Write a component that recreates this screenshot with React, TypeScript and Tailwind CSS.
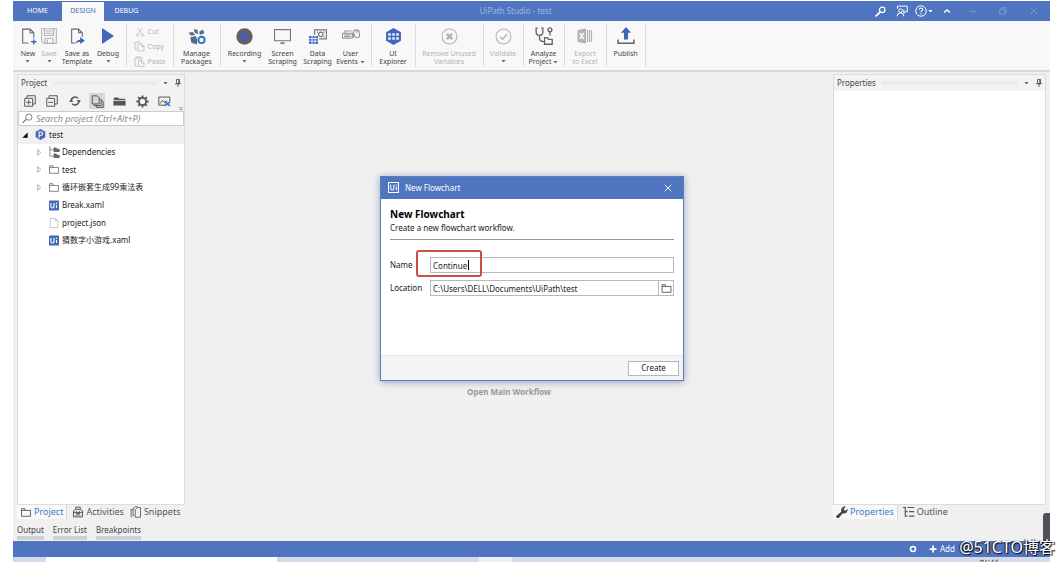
import type { ReactNode } from 'react'

type IconProps = { className?: string; children: ReactNode }

// All line icons share a 16x16 box
function Icon({ className = 'w-4 h-4', children }: IconProps) {
  return (
    <svg viewBox="0 0 16 16" fill="none" stroke="currentColor" className={`shrink-0 ${className}`} aria-hidden="true">
      {children}
    </svg>
  )
}

function Caret({ className = 'text-[#666]' }: { className?: string }) {
  return (
    <svg viewBox="0 0 5 3" className={`inline-block w-[5px] h-[3px] shrink-0 ${className}`} aria-hidden="true">
      <path d="M0.5 0h4L2.5 2.6z" fill="currentColor" />
    </svg>
  )
}

function FolderIcon({ className }: { className?: string }) {
  return (
    <Icon className={className}>
      <path d="M1.5 13.5v-11h5v2.5h8v8.5zM1.5 5h5" strokeWidth="1.3" />
    </Icon>
  )
}

function UiIcon() {
  return (
    <svg viewBox="0 0 16 16" className="w-[10px] h-[11px] shrink-0" aria-hidden="true">
      <rect width="16" height="16" rx="1" fill="#4569b8" />
      <path d="M3 4v5.500q0 2.500 2.500 2.500t2.500-2.500V4M12 7v5M12 3.500v2" stroke="#fff" strokeWidth="1.8" fill="none" />
    </svg>
  )
}

function PinIcon() {
  return (
    <Icon className="w-2 h-2">
      <path d="M5 1h6v8H5zM9.5 1v8M2 9.5h12M8 10v6" strokeWidth="1.6" />
    </Icon>
  )
}

function CopyIcon({ className }: { className?: string }) {
  return (
    <Icon className={className}>
      <path d="M5 12H1.5V1.5H8L10 4M5.500 4.5h6l3 3v7h-9zM11 4.5V8h3.500" />
    </Icon>
  )
}

type RibbonButtonProps = {
  icon: ReactNode
  lines: string[]
  width: string
  caret?: 'below' | 'inline'
  disabled?: boolean
}

function RibbonButton({ icon, lines, width, caret, disabled }: RibbonButtonProps) {
  return (
    <button type="button" disabled={disabled} className={`flex flex-col items-center pt-[2px] ${width} ${disabled ? 'text-[#b3b3b3]' : 'text-[#444]'}`}>
      <span className="flex h-5 items-center justify-center">{icon}</span>
      <span className="mt-1 flex flex-col items-center whitespace-nowrap text-[7px] leading-[8px]">
        {lines.map((line, i) => (
          <span key={line} className="flex items-center gap-[2px]">
            {line}
            {caret === 'inline' && i === lines.length - 1 && <Caret />}
          </span>
        ))}
        {caret === 'below' && <Caret className="mt-[2px] text-[#666]" />}
      </span>
    </button>
  )
}

function RibbonGroup({ width, children }: { width: string; children: ReactNode }) {
  return <div className={`flex shrink-0 justify-center border-r border-[#dcdcdc] pr-px ${width}`}>{children}</div>
}

const clipboard = [
  {
    label: 'Cut',
    icon: <Icon className="w-[10px] h-[10px]"><path d="M4 1l7 10M12 1L5 11" /><circle cx="4" cy="13" r="2" /><circle cx="12" cy="13" r="2" /></Icon>,
  },
  { label: 'Copy', icon: <CopyIcon className="w-[11px] h-[11px]" /> },
  {
    label: 'Paste',
    icon: <Icon className="w-[11px] h-[11px]"><path d="M6 14.5H1.5v-12H4M9 2.5h2.500V5M4 1h5v3H4zM6.500 6.5h5l3 3v6h-8zM11 6.5V10h3.500" /></Icon>,
  },
]

function Ribbon() {
  return (
    <div className="flex h-[51px] shrink-0 border-b-2 border-[#d9d9d9] bg-[#f8f8f8] py-[3px]">
      <RibbonGroup width="w-[114px]">
        <RibbonButton width="w-[22px]" lines={['New']} caret="below" icon={
          <Icon className="w-[17px] h-[18px] text-[#666]">
            <path d="M8 14.5H2.500v-13h7l3.500 3.500v5M9.500 1.5V5H13" />
            <path d="M13 11v5M10.500 13.5h5" stroke="#3f66b8" strokeWidth="1.4" />
          </Icon>
        } />
        <RibbonButton width="w-5" lines={['Save']} caret="below" disabled icon={
          <Icon className="w-[18px] h-[18px]">
            <path d="M1.5 1.5h13v13h-11l-2-2zM4 1.5v6h8v-6M5 3.5h6M5 5.5h6M4.500 14.5v-4.500h7v4.500M6.500 11v3" />
          </Icon>
        } />
        <RibbonButton width="w-9" lines={['Save as', 'Template']} icon={
          <Icon className="w-[17px] h-[18px] text-[#666]">
            <path d="M6 14.5H2.500v-13h6.500l3.500 3.500v4M9 1.5V5h3.500" />
            <path d="M6.500 15q.5-3.500 4-3.500V9l4.500 3.500-4.500 3v-2q-2.500 0-4 1.500z" fill="#3f66b8" stroke="none" />
          </Icon>
        } />
        <RibbonButton width="w-[26px]" lines={['Debug']} caret="below" icon={
          <Icon className="w-4 h-4"><path d="M2 0l12 8-12 8z" fill="#4168bd" stroke="none" /></Icon>
        } />
      </RibbonGroup>

      <RibbonGroup width="w-[47px]">
        <div className="flex flex-col gap-[4px] pt-[2px]">
          {clipboard.map((item) => (
            <button key={item.label} type="button" disabled className="flex h-[11px] items-center gap-[2px] text-[7px] leading-[11px] text-[#b3b3b3]">
              <span className="flex w-3 justify-center">{item.icon}</span>
              {item.label}
            </button>
          ))}
        </div>
      </RibbonGroup>

      <RibbonGroup width="w-[47px]">
        <RibbonButton width="w-10" lines={['Manage', 'Packages']} icon={
          <Icon className="w-[18px] h-[18px]">
            <path d="M2 9l5-1 1 3v4.500L3 14zM.5 5l3.500-.5 2.500 2.500-4 .5zM5 2l3.500.5L9 6.500 6 5zM10 4l3.500-1.500 1 3-4 1.500z" fill="#566a8c" stroke="none" />
            <circle cx="12" cy="11.5" r="2.800" stroke="#2f6fd0" strokeWidth="1.700" />
          </Icon>
        } />
      </RibbonGroup>

      <RibbonGroup width="w-[151px]">
        <RibbonButton width="w-10" lines={['Recording']} caret="below" icon={
          <Icon className="w-[17px] h-[17px]">
            <circle cx="8" cy="8" r="7.700" fill="#626262" stroke="none" />
            <circle cx="8" cy="8" r="3.600" fill="#4a5cb8" stroke="none" />
          </Icon>
        } />
        <RibbonButton width="w-9" lines={['Screen', 'Scraping']} icon={
          <Icon className="w-[17px] h-[17px] text-[#777]">
            <path d="M.5 1.5h15v10.500H.5z" />
            <path d="M6 13.5h4v1.500H6z" fill="currentColor" stroke="none" />
          </Icon>
        } />
        <RibbonButton width="w-[34px]" lines={['Data', 'Scraping']} icon={
          <Icon className="w-[18px] h-[18px] text-[#777]">
            <path d="M5 7V2.500h10.500v8H9M7 4.500h1M13 4.500h1M13 8.500h1" />
            <circle cx="10.500" cy="6.500" r="2" />
            <path d="M0 8h8v7H0z" fill="#4268c4" stroke="none" />
            <path d="M0 10.300h8M0 12.600h8M2.700 8v7M5.300 8v7" stroke="#f8f8f8" strokeWidth=".7" />
          </Icon>
        } />
        <RibbonButton width="w-8" lines={['User', 'Events']} caret="inline" icon={
          <Icon className="w-[18px] h-[18px] text-[#999]">
            <path d="M.5 5.500h8.500V10H.5zM2 7h5.500M2 8.500h5.500M2.500 5.500V3.500h6M10 9.500V5q0-2.500 2.700-2.500T15.500 5v3q0 1.500-2 1.500T11 8V5.500M13 2.500V5.500" />
          </Icon>
        } />
      </RibbonGroup>

      <RibbonGroup width="w-[44px]">
        <RibbonButton width="w-10" lines={['UI', 'Explorer']} icon={
          <Icon className="w-[17px] h-[17px]">
            <path d="M8 0l7 4v8l-7 4-7-4V4z" fill="#4066be" stroke="none" />
            <path d="M3 5h2.500v2.200H3zM6.800 5h2.500v2.200H6.800zM10.500 5H13v2.200h-2.500zM3 8.800h2.500V11H3zM6.800 8.800h2.500V11H6.800zM10.500 8.800H13V11h-2.500z" fill="#e6edfb" stroke="none" />
          </Icon>
        } />
      </RibbonGroup>

      <RibbonGroup width="w-[68px]">
        <RibbonButton width="w-16" lines={['Remove Unused', 'Variables']} disabled icon={
          <Icon className="w-[17px] h-[17px]">
            <circle cx="8" cy="8" r="7" />
            <path d="M5.500 5.500l5 5M10.500 5.500l-5 5" strokeWidth="2.400" />
          </Icon>
        } />
      </RibbonGroup>

      <RibbonGroup width="w-10">
        <RibbonButton width="w-9" lines={['Validate']} caret="below" disabled icon={
          <Icon className="w-[17px] h-[17px]">
            <circle cx="8" cy="8" r="7" />
            <path d="M4.800 8.200l2.400 2.300 4.200-4.700" strokeWidth="1.300" />
          </Icon>
        } />
      </RibbonGroup>

      <RibbonGroup width="w-[41px]">
        <RibbonButton width="w-9" lines={['Analyze', 'Project']} caret="inline" icon={
          <Icon className="w-[18px] h-[18px] text-[#666]">
            <path d="M2.500 1H1v3q0 3.500 3 3.500t3-3.500V1H5.500M4 7.500v2q0 3.500 4 3.500" strokeWidth="1.200" />
            <circle cx="13.300" cy="2.500" r="1.700" strokeWidth="1.200" />
            <path d="M13.300 4v3.500M8.500 15.300V9.500h2.500l1 1.500h3.300v4.300z" strokeWidth="1.200" />
          </Icon>
        } />
      </RibbonGroup>

      <RibbonGroup width="w-[42px]">
        <RibbonButton width="w-9" lines={['Export', 'to Excel']} disabled icon={
          <Icon className="w-4 h-4">
            <path d="M.5 2L9 .5v15L.5 14z" fill="currentColor" stroke="none" />
            <path d="M2.800 5l4 6M6.800 5l-4 6" stroke="#f8f8f8" strokeWidth="1.400" />
            <path d="M10.500 2v12M12.500 2v12M14.500 2v12" strokeWidth="1.200" />
          </Icon>
        } />
      </RibbonGroup>

      <RibbonGroup width="w-[39px]">
        <RibbonButton width="w-9" lines={['Publish']} icon={
          <Icon className="w-[18px] h-[18px]">
            <path d="M8 0l4.500 5H9.800v6H6.200V5H3.500z" fill="#3f66b8" stroke="none" />
            <path d="M1 11v3.500h14V11" stroke="#666" strokeWidth="1.400" />
          </Icon>
        } />
      </RibbonGroup>
    </div>
  )
}

function TitleBar() {
  return (
    <header className="relative flex h-5 shrink-0 items-stretch bg-[#5075c0] text-[7px] text-white">
      <nav className="flex pt-px">
        <button type="button" className="w-[49px]">HOME</button>
        <button type="button" className="w-[42px] bg-[#f8f8f8] text-[#4a6fbf]">DESIGN</button>
        <button type="button" className="w-[45px]">DEBUG</button>
      </nav>
      <h1 className="absolute left-1/2 -translate-x-1/2 whitespace-nowrap pr-8 text-[8px] leading-5 text-[#9db5df]">UiPath Studio - test</h1>
      <div className="ml-auto flex items-center pr-[2px]">
        <button type="button" aria-label="Search" className="flex w-[21px] justify-center">
          <Icon className="w-[11px] h-[11px]"><circle cx="10.500" cy="5.500" r="4" strokeWidth="1.800" /><path d="M7.500 8.500L1 15" strokeWidth="2.600" /></Icon>
        </button>
        <button type="button" aria-label="Feedback" className="flex w-[21px] justify-center">
          <Icon className="w-[12px] h-[12px]"><circle cx="6" cy="7.500" r="2.500" strokeWidth="1.300" /><path d="M1.500 15q0-4.500 4.500-4.500t4.500 4.500M2 5V1.500h13V9h-3l-1.500 2V6" strokeWidth="1.300" /></Icon>
        </button>
        <button type="button" aria-label="Help" className="flex w-[23px] items-center justify-center gap-[1px]">
          <Icon className="w-[12px] h-[12px]"><circle cx="8" cy="8" r="7" strokeWidth="1.300" /><path d="M5.800 6.200q.2-2.200 2.300-2.200t2.200 2q0 1-1.200 1.800T8 9.700M8 11v1.500" strokeWidth="1.400" /></Icon>
          <Caret className="text-white" />
        </button>
        <button type="button" aria-label="Collapse ribbon" className="flex w-[23px] justify-center">
          <Icon className="w-2 h-2"><path d="M2 11l6-5 6 5" strokeWidth="3" /></Icon>
        </button>
        <button type="button" aria-label="Minimize" className="flex w-[29px] justify-center text-[#86a2d8]">
          <Icon className="w-2 h-2"><path d="M1 9h14" strokeWidth="1.500" /></Icon>
        </button>
        <button type="button" aria-label="Restore" className="flex w-8 justify-center text-[#86a2d8]">
          <Icon className="w-2 h-2"><path d="M1.500 4.500h10v10h-10zM4.500 4V1.500h10v10H12" strokeWidth="1.500" /></Icon>
        </button>
        <button type="button" aria-label="Close" className="flex w-[29px] justify-center text-[#86a2d8]">
          <Icon className="w-2 h-2"><path d="M2 2l12 12M14 2L2 14" strokeWidth="1.500" /></Icon>
        </button>
      </div>
    </header>
  )
}

function PanelHeader({ title }: { title: string }) {
  return (
    <div className="flex h-4 shrink-0 items-center gap-[6px] bg-[#f2f2f2] pl-[3px] pr-[2px] text-[8px] text-[#444]">
      <h2>{title}</h2>
      <span className="h-1 flex-1 bg-[#ebebeb]" />
      <Caret />
      <PinIcon />
    </div>
  )
}

const tree = [
  { label: 'Dependencies', kind: 'deps' },
  { label: 'test', kind: 'folder' },
  { label: '循环嵌套生成99乘法表', kind: 'folder' },
  { label: 'Break.xaml', kind: 'xaml' },
  { label: 'project.json', kind: 'json' },
  { label: '猜数字小游戏.xaml', kind: 'xaml' },
]

function TreeIcon({ kind }: { kind: string }) {
  if (kind === 'xaml') return <UiIcon />
  if (kind === 'folder') return <FolderIcon className="w-[12px] h-[11px] text-[#777]" />
  if (kind === 'json') {
    return <Icon className="w-[10px] h-[12px] text-[#aaa]"><path d="M2 .8h8.500l3.500 3.500v11H2zM10.500 1v3.500H14" /></Icon>
  }
  return (
    <Icon className="w-[12px] h-[12px] text-[#666]">
      <path d="M2.500 0v13.500h5M2.500 5h5" />
      <path d="M7.500 2H11l1 1.500h3.500V8h-8zM7.500 10H11l1 1.500h3.500V16h-8z" fill="currentColor" stroke="none" />
    </Icon>
  )
}

function ProjectTree() {
  return (
    <ul className="grid h-[123px] auto-rows-fr text-[8px] text-[#222]">
      <li className="flex items-center gap-[3px] bg-[#f0f0f0] pl-1">
        <Icon className="mr-1 w-[6px] h-[6px] text-black"><path d="M15 1v14H1z" fill="currentColor" stroke="none" /></Icon>
        <svg viewBox="0 0 16 16" className="w-[11px] h-[11px] shrink-0" aria-hidden="true">
          <path d="M8 0l7 4v8l-7 4-7-4V4z" fill="#4569b8" />
          <path d="M6 13V4.500h2.500q2.500 0 2.500 2.300T8.500 9H6" stroke="#fff" strokeWidth="1.500" fill="none" />
        </svg>
        test
      </li>
      {tree.map((node) => (
        <li key={node.label} className="flex items-center pl-[18px]">
          <span className="flex w-3 items-center">
            {(node.kind === 'deps' || node.kind === 'folder') && (
              <Icon className="w-[7px] h-[7px] text-[#999]"><path d="M4 1.500l7 6.500-7 6.500z" strokeWidth="1.800" /></Icon>
            )}
          </span>
          <span className="mr-[2px] flex w-3 justify-center"><TreeIcon kind={node.kind} /></span>
          <span>{node.label}</span>
        </li>
      ))}
    </ul>
  )
}

function ToolButton({ label, active, children }: { label: string; active?: boolean; children: ReactNode }) {
  return (
    <button type="button" aria-label={label} className={`flex h-4 w-4 items-center justify-center ${active ? 'bg-[#d8d8d8]' : ''}`}>
      {children}
    </button>
  )
}

function ProjectPanel() {
  return (
    <section className="flex w-[168px] shrink-0 flex-col border border-[#dcdcdc] bg-white">
      <PanelHeader title="Project" />
      <div className="flex h-5 shrink-0 items-center justify-between bg-[#f2f2f2] pl-1 pr-[1px] text-[#555]">
        <ToolButton label="Expand all">
          <Icon className="w-[12px] h-[12px]"><path d="M1 4.500h10.500V15H1zM4 4V1h11v11h-3M6.300 6.500v6.500M3 9.800h6.500" strokeWidth="1.300" /></Icon>
        </ToolButton>
        <ToolButton label="Collapse all">
          <Icon className="w-[12px] h-[12px]"><path d="M1 4.500h10.500V15H1zM4 4V1h11v11h-3M3 9.800h6.500" strokeWidth="1.300" /></Icon>
        </ToolButton>
        <ToolButton label="Refresh">
          <Icon className="w-[12px] h-[12px]">
            <path d="M3 9A5.200 5.200 0 0 1 12 4.500M13 7A5.200 5.200 0 0 1 4 11.500" strokeWidth="2" />
            <path d="M0 9h6L3 5.500zM10 7h6l-3 3.500z" fill="currentColor" stroke="none" />
          </Icon>
        </ToolButton>
        <ToolButton label="Show all files" active>
          <Icon className="w-[13px] h-[13px]"><path d="M1.500 1h6l2.500 2.500V11H1.500zM4 11v2h8.500V6L10 3.500M6.500 13v2.200H15V8l-2.500-2" strokeWidth="1.200" /></Icon>
        </ToolButton>
        <ToolButton label="Open folder">
          <Icon className="w-[13px] h-[13px]"><path d="M1 3h5.500l1 1.500H15V6H1zM.5 7h15v6h-15z" fill="currentColor" stroke="none" /></Icon>
        </ToolButton>
        <ToolButton label="Settings">
          <Icon className="w-[13px] h-[13px]">
            <circle cx="8" cy="8" r="4.500" strokeWidth="2.200" />
            <path d="M8 .5V3M8 13v2.500M.5 8H3M13 8h2.500M2.700 2.700l1.800 1.800M11.500 11.500l1.800 1.800M2.700 13.300l1.800-1.800M11.500 4.500l1.800-1.800" strokeWidth="2.300" />
          </Icon>
        </ToolButton>
        <ToolButton label="Remove unused screenshots">
          <Icon className="w-[13px] h-[13px]">
            <path d="M9 12.500H1v-10h13.500V8M2.500 10.500l3-4 2.500 2.500 2-2 2 2" strokeWidth="1.200" />
            <path d="M8 8.500l7 5M15 8.500l-7 5" stroke="#2f6fc0" strokeWidth="1.800" />
          </Icon>
        </ToolButton>
        <Icon className="h-1 w-1 self-end text-[#777]"><path d="M1 3h14M3 10h10" strokeWidth="3" /></Icon>
      </div>
      <label className="flex h-[15px] shrink-0 items-center gap-[3px] border border-[#ccc] bg-white px-[3px]">
        <Icon className="w-[11px] h-[11px] text-[#666]"><circle cx="10" cy="6" r="4.500" strokeWidth="1.200" /><path d="M6.500 9L1 14.500" strokeWidth="1.600" /></Icon>
        <input type="search" aria-label="Search project" placeholder="Search project (Ctrl+Alt+P)" className="min-w-0 flex-1 bg-transparent text-[9px] italic leading-3 outline-none placeholder:text-[#8a8a8a]" />
      </label>
      <ProjectTree />
    </section>
  )
}

function DockTab({ label, icon, active }: { label: string; icon: ReactNode; active?: boolean }) {
  return (
    <button type="button" className={`flex items-center gap-[2px] px-[3px] text-[9px] leading-3 ${active ? 'mr-[2px] border-r border-[#d8d8d8] bg-[#f8f8f8] text-[#4a78c8]' : 'text-[#555]'}`}>
      {icon}
      {label}
    </button>
  )
}

function NewFlowchartDialog() {
  return (
    <div role="dialog" aria-labelledby="dialog-title" className="flex h-[205px] w-[304px] flex-col border border-[#5b7db8] bg-white shadow-[0_1px_7px_rgba(60,80,150,0.5)]">
      <div className="flex h-[22px] shrink-0 items-center gap-[6px] bg-[#5075c0] px-[7px] pb-px text-[8px] text-white">
        <Icon className="w-[11px] h-[11px]">
          <path d="M.8.8h14.400v14.400H.8zM4 4v5q0 2.500 2.200 2.500T8.500 9V4M12 7v5M12 3.500v1.800" strokeWidth="1.500" />
        </Icon>
        <span>New Flowchart</span>
        <button type="button" aria-label="Close" className="ml-auto flex w-4 justify-center">
          <Icon className="w-2 h-2"><path d="M1.500 1.500l13 13M14.500 1.500l-13 13" strokeWidth="1.800" /></Icon>
        </button>
      </div>
      <form className="flex flex-1 flex-col text-[8px] text-[#222]">
        <div className="flex-1 px-[9px] pt-[7px]">
          <h2 id="dialog-title" className="text-[10px] font-bold leading-4 text-black">New Flowchart</h2>
          <p className="border-b border-[#999] pb-[5px] leading-3">Create a new flowchart workflow.</p>
          <div className="mt-[17px] flex items-center">
            <label htmlFor="name" className="w-10">Name</label>
            <div className="relative flex flex-1">
              <input id="name" defaultValue="Continue" className="h-4 min-w-0 flex-1 border border-[#b8b8b8] px-[2px] text-[8px] outline-none" />
              {/* text cursor and red highlight */}
              <span className="absolute left-[38px] top-[3px] h-[10px] w-px bg-black" />
              <span className="pointer-events-none absolute -left-[14px] -top-[7px] h-[27px] w-[66px] rounded-[3px] border-2 border-[#c64f46]" />
            </div>
          </div>
          <div className="mt-[7px] flex items-center">
            <label htmlFor="location" className="w-10">Location</label>
            <input id="location" defaultValue="C:\Users\DELL\Documents\UiPath\test" className="h-4 min-w-0 flex-1 border border-[#b8b8b8] px-[2px] text-[8px] outline-none" />
            <button type="button" aria-label="Browse" className="flex h-4 w-[15px] items-center justify-center border border-l-0 border-[#b8b8b8] text-[#555]">
              <FolderIcon className="w-[13px] h-[11px]" />
            </button>
          </div>
        </div>
        <div className="flex h-[25px] shrink-0 items-center justify-end border-t border-[#e8e8e8] bg-[#f4f4f4] px-1">
          <button type="button" className="h-[15px] w-[51px] border border-[#b8b8b8] bg-white text-[8px] leading-3">Create</button>
        </div>
      </form>
    </div>
  )
}

export default function App() {
  return (
    <div className="relative flex h-screen flex-col overflow-hidden bg-white pb-[2px] pl-[13px] pr-[14px] pt-px font-['Noto_Sans','Noto_Sans_CJK_SC',sans-serif]">
      <TitleBar />
      <Ribbon />

      <main className="flex min-h-0 flex-1 flex-col bg-[#f0f0f0] pt-[2px]">
        <div className="flex min-h-0 flex-1 pl-1 pr-1">
          <ProjectPanel />
          <div className="flex-1 pt-[303px] text-center">
            <button type="button" className="text-[8px] font-bold leading-3 text-[#999]">Open Main Workflow</button>
          </div>
          <section className="flex w-[213px] shrink-0 flex-col border border-[#dcdcdc] bg-white">
            <PanelHeader title="Properties" />
          </section>
        </div>

        <div className="flex h-[14px] shrink-0 pl-1 pr-1">
          <div className="flex flex-1">
            <DockTab label="Project" active icon={<FolderIcon className="w-[12px] h-[11px] text-[#555]" />} />
            <DockTab label="Activities" icon={
              <Icon className="w-[12px] h-[12px]"><path d="M2 14.500v-8l3-2h6l3 2v8zM5 4.500V1.500h6v3M2 8.500h12M4.500 12h7M6 7v3h4V7" strokeWidth="1.300" /></Icon>
            } />
            <DockTab label="Snippets" icon={
              <Icon className="w-[12px] h-[12px]"><path d="M3 14.500H1.500v-10H5M6 12.500H4v-9l3-2.500h3M7 15V5l2.500-3H14v13z" strokeWidth="1.100" /></Icon>
            } />
          </div>
          <div className="flex w-[213px]">
            <DockTab label="Properties" active icon={
              <Icon className="w-[12px] h-[12px] text-[#444]"><path d="M1 15.500q-1.500-1.500 0-3l6-5q-1-4 2-6 2-1.500 4-1l-2.500 3 .5 2 2 .5 2.500-2.500q.5 3-1.500 5t-5 1l-5 6q-1.500 1.500-3 0z" fill="currentColor" stroke="none" /></Icon>
            } />
            <DockTab label="Outline" icon={
              <Icon className="w-[12px] h-[12px]"><path d="M0 2h4M6 2h9M3 2v11.500h3M3 7.500h3M8 7.500h7M8 13.500h7" strokeWidth="1.500" /></Icon>
            } />
          </div>
        </div>

        <div className="flex h-[22px] shrink-0 items-end gap-[9px] pb-px pl-1 text-[8px] leading-3 text-[#444]">
          {['Output', 'Error List', 'Breakpoints'].map((name) => (
            <button key={name} type="button" className="border-b-4 border-[#d2cfd3]">{name}</button>
          ))}
        </div>
      </main>

      <footer className="flex h-4 shrink-0 items-center bg-[#5075c0] pr-[9px] text-[8px] text-white">
        <div className="ml-auto flex items-center gap-3">
          <Icon className="w-[8px] h-[8px]"><circle cx="8" cy="8" r="5" strokeWidth="3" /></Icon>
          <button type="button" className="flex w-[112px] items-center gap-[3px]">
            <Icon className="w-[8px] h-[8px]"><path d="M8 1v14M1 8h14" strokeWidth="3.500" /></Icon>
            Add
          </button>
        </div>
      </footer>

      {/* Taskbar edge */}
      <div className="flex h-[5px] shrink-0 bg-[#d3daea]">
        <span className="w-[33px]" />
        <span className="w-[231px] bg-white" />
        <span className="w-[202px]" />
        <span className="w-[33px] bg-[#f3eff8]" />
        <svg viewBox="0 0 20 3" className="ml-auto mr-[51px] h-[3px] w-5 self-end" aria-hidden="true">
          <path d="M1 2l3-1v2M7 3V1M10 1v1M13 3q0-2 2-2M17 3q0-2 2-2" stroke="#555" fill="none" />
        </svg>
      </div>

      <span className="absolute bottom-[23px] right-[14px] h-7 w-[7px] rounded-tl-[3px] bg-[#505058]" />
      <div className="absolute inset-x-0 top-0 flex justify-center pt-[176px]">
        <NewFlowchartDialog />
      </div>
      <span className="absolute bottom-[7px] right-[9px] whitespace-nowrap text-[16px] leading-5 text-white [text-shadow:1px_1px_1px_#000,-1px_0_1px_#222]">@51CTO博客</span>
    </div>
  )
}
